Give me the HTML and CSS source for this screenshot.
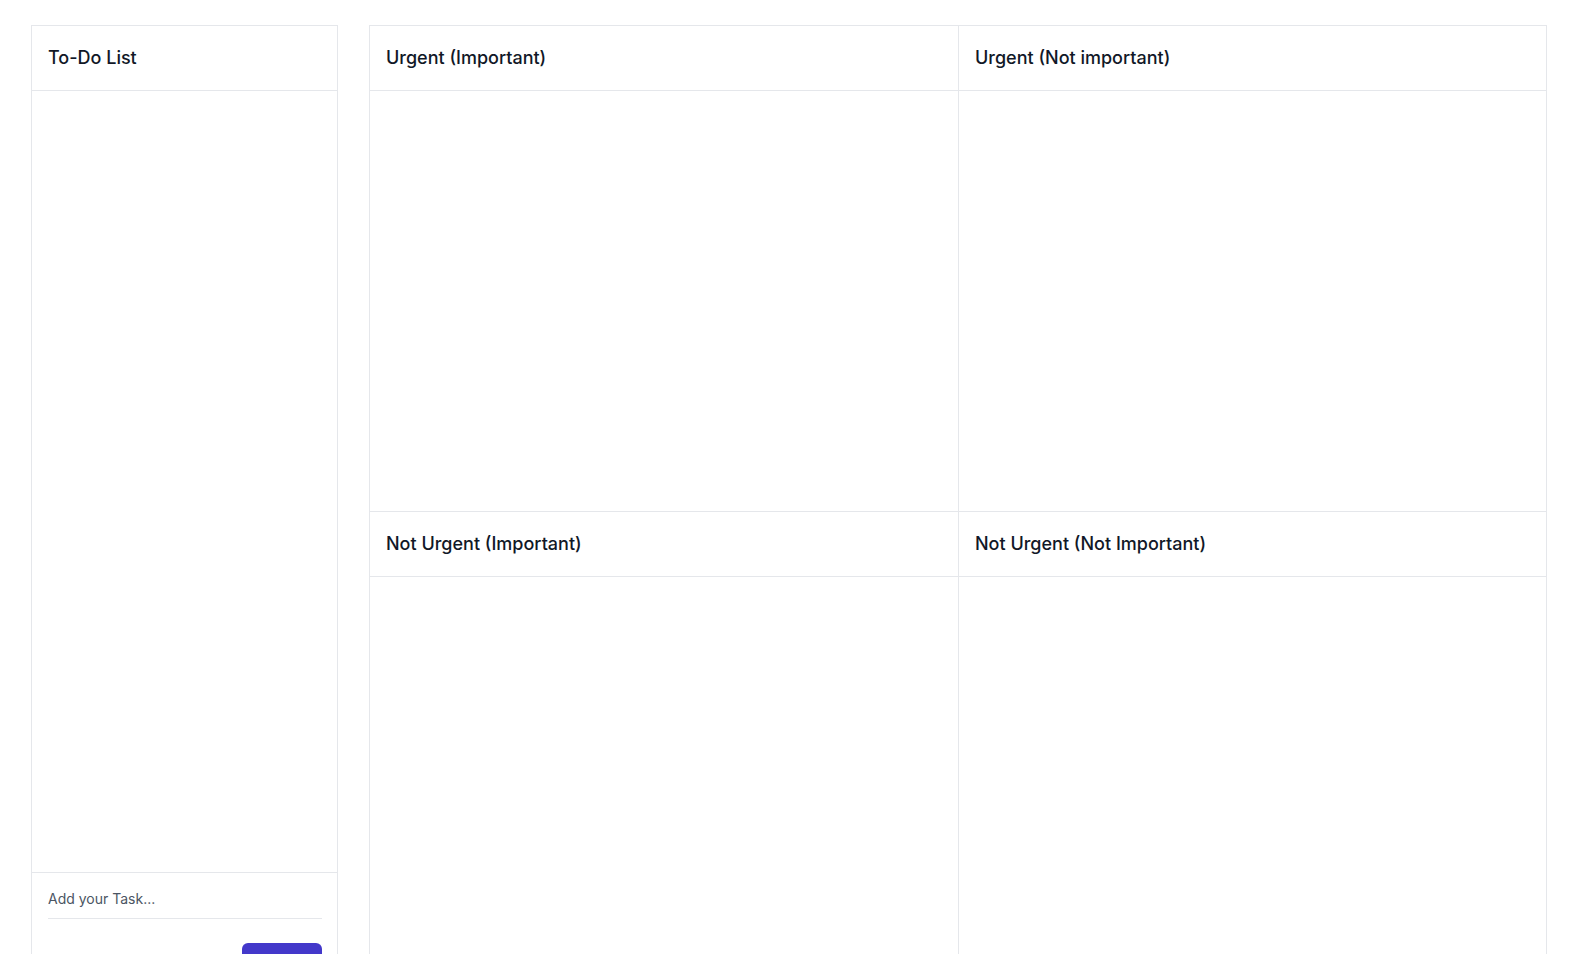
FILE: index.html
```html
<!DOCTYPE html>
<html lang="en">
<head>
<meta charset="utf-8">
<title>Eisenhower Matrix</title>
<link rel="stylesheet" href="styles.css">
</head>
<body>
<div class="page">
  <aside class="todo">
    <div class="panel-head">To-Do List</div>
    <div class="todo-list"></div>
    <div class="todo-form">
      <input class="task-input" type="text" placeholder="Add your Task...">
      <div class="form-actions">
        <button class="add-btn" type="button">Add</button>
      </div>
    </div>
  </aside>
  <main class="matrix">
    <section class="quad q1">
      <div class="panel-head">Urgent (Important)</div>
      <div class="quad-body"></div>
    </section>
    <section class="quad q2">
      <div class="panel-head">Urgent (Not important)</div>
      <div class="quad-body"></div>
    </section>
    <section class="quad q3">
      <div class="panel-head">Not Urgent (Important)</div>
      <div class="quad-body"></div>
    </section>
    <section class="quad q4">
      <div class="panel-head">Not Urgent (Not Important)</div>
      <div class="quad-body"></div>
    </section>
  </main>
</div>
</body>
</html>
```

FILE: styles.css
```css
* { box-sizing: border-box; }

html, body {
  margin: 0;
  padding: 0;
  background: #ffffff;
  font-family: Inter, "Noto Sans", "Liberation Sans", sans-serif;
  color: #111827;
}

.page {
  display: flex;
  align-items: flex-start;
  gap: 31px;
  padding: 25px 43px 0 31px;
}

.todo {
  width: 307px;
  flex: none;
  border: 1px solid #e5e7eb;
  display: flex;
  flex-direction: column;
}

.panel-head {
  padding: 18px 16px;
  font-size: 18px;
  line-height: 28px;
  font-weight: 500;
  color: #111827;
  border-bottom: 1px solid #e5e7eb;
}

.todo-list {
  height: 781px;
}

.todo-form {
  border-top: 1px solid #e5e7eb;
  padding: 16px 15px 16px 16px;
}

.task-input {
  display: block;
  width: 100%;
  border: 0;
  border-bottom: 1px solid #e5e7eb;
  padding: 0 0 9px 0;
  font-family: inherit;
  font-size: 14px;
  line-height: 20px;
  color: #111827;
  outline: none;
  background: transparent;
}

.task-input::placeholder {
  color: #4b5563;
}

.form-actions {
  display: flex;
  justify-content: flex-end;
  margin-top: 24px;
}

.add-btn {
  width: 80px;
  height: 36px;
  border: 0;
  border-radius: 6px;
  background: #4338ca;
  color: #ffffff;
  font-family: inherit;
  font-size: 14px;
  font-weight: 500;
}

.matrix {
  flex: 1;
  display: grid;
  grid-template-columns: 589px 1fr;
  border: 1px solid #e5e7eb;
}

.quad {
  height: 486px;
  display: flex;
  flex-direction: column;
}

.q1, .q3 {
  border-right: 1px solid #e5e7eb;
}

.q1, .q2 {
  border-bottom: 1px solid #e5e7eb;
}

.quad-body {
  flex: 1;
}
```
